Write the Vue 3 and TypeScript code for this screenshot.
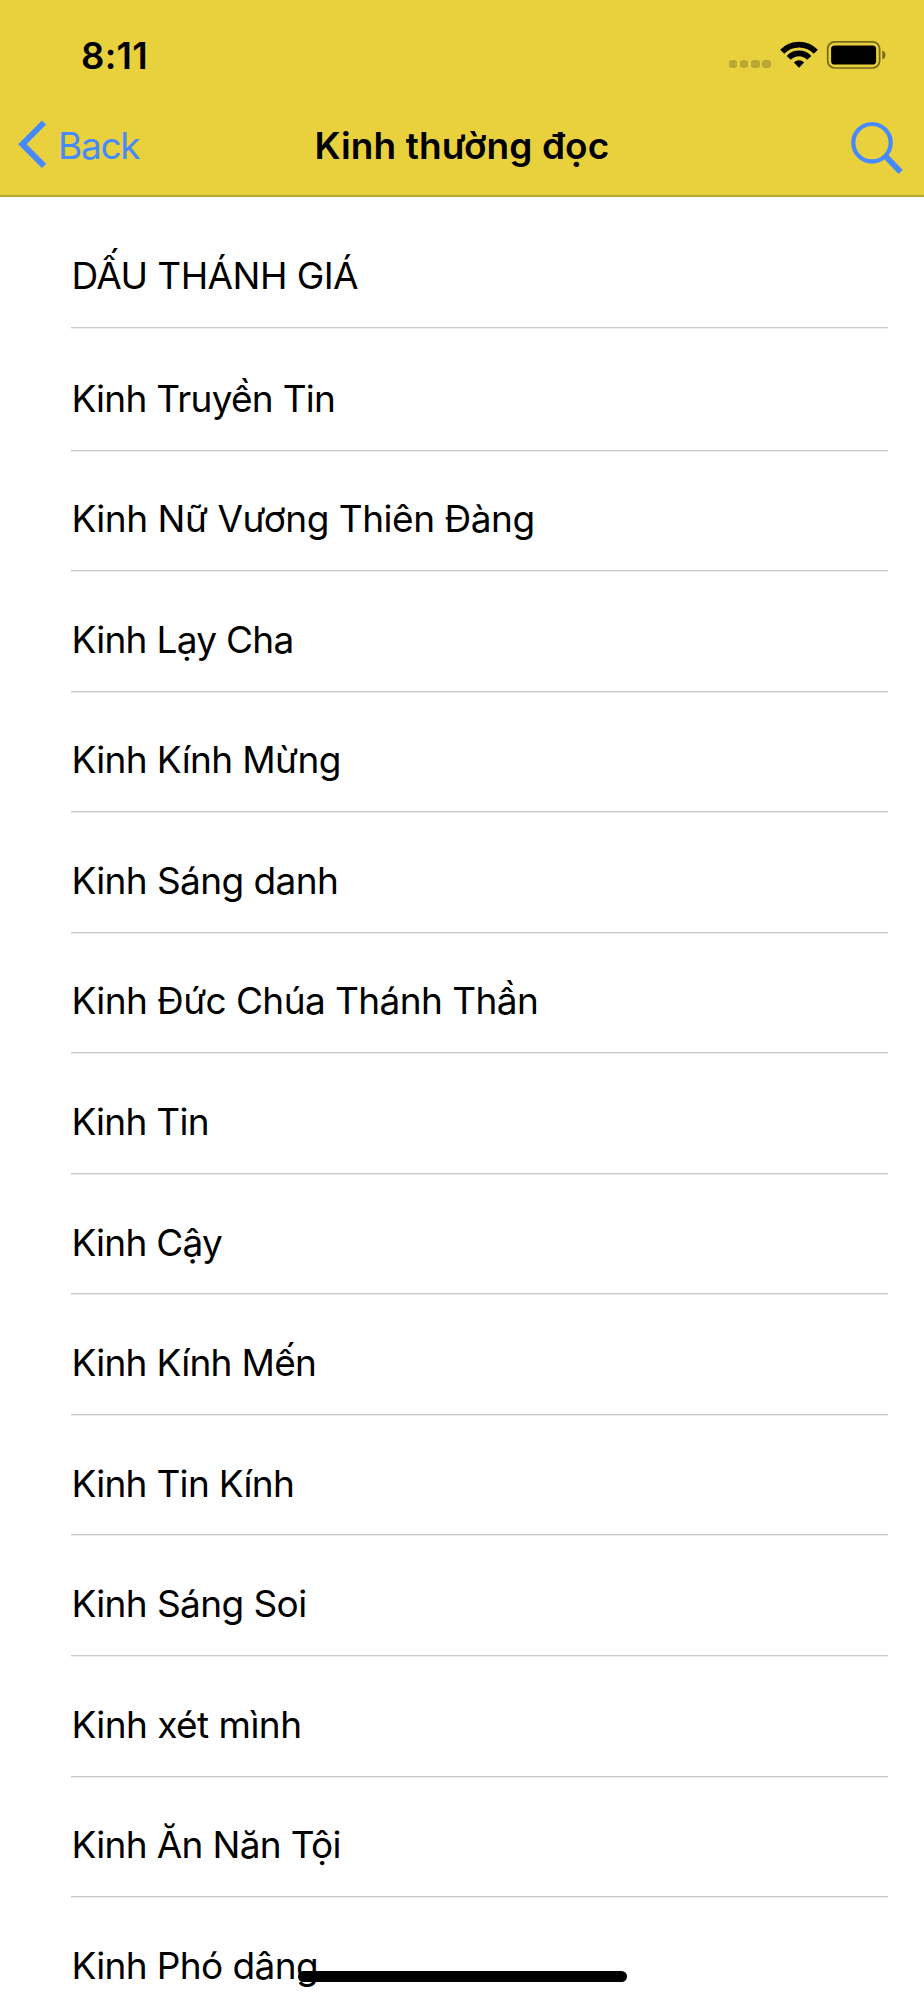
<script setup lang="ts">
interface Prayer {
  title: string
  tracking: number
}

const prayers: Prayer[] = [
  { title: 'DẤU THÁNH GIÁ', tracking: -0.56 },
  { title: 'Kinh Truyền Tin', tracking: -0.73 },
  { title: 'Kinh Nữ Vương Thiên Đàng', tracking: -0.47 },
  { title: 'Kinh Lạy Cha', tracking: -0.7 },
  { title: 'Kinh Kính Mừng', tracking: -0.62 },
  { title: 'Kinh Sáng danh', tracking: -0.6 },
  { title: 'Kinh Đức Chúa Thánh Thần', tracking: -0.58 },
  { title: 'Kinh Tin', tracking: -0.72 },
  { title: 'Kinh Cậy', tracking: -0.75 },
  { title: 'Kinh Kính Mến', tracking: -0.7 },
  { title: 'Kinh Tin Kính', tracking: -0.7 },
  { title: 'Kinh Sáng Soi', tracking: -0.6 },
  { title: 'Kinh xét mình', tracking: -0.54 },
  { title: 'Kinh Ăn Năn Tội', tracking: -0.66 },
  { title: 'Kinh Phó dâng', tracking: -0.62 },
]
</script>

<template>
  <div class="screen">
    <header class="top">
      <div class="status">
        <span class="time">8:11</span>
        <div class="indicators">
          <div class="dots"><i v-for="n in 4" :key="n" /></div>
          <svg class="wifi" width="38" height="28" viewBox="0 0 38 28">
            <g fill="none" stroke="#000" stroke-width="5.7">
              <path d="M2.2 10.8A23.15 23.15 0 0 1 35.8 10.8" />
              <path d="M8.7 16.9A14.2 14.2 0 0 1 29.3 16.9" />
            </g>
            <path d="M19 26.7L13.9 21.4A7.4 7.4 0 0 1 24.1 21.4Z" />
          </svg>
          <svg class="battery" width="60" height="28" viewBox="0 0 60 28">
            <rect x="1.7" y="0.9" width="51.9" height="26.1" rx="7" fill="none" stroke="#000" stroke-opacity=".5" stroke-width="1.7" />
            <rect x="5.1" y="4.5" width="45" height="19" rx="3.6" />
            <path d="M56.3 9.6C60.5 11 60.5 17 56.3 18.4Z" fill-opacity=".5" />
          </svg>
        </div>
      </div>
      <nav class="nav">
        <button class="back">
          <svg width="32" height="48" viewBox="0 0 32 48">
            <path d="M28 2.5L6.4 24.2L28 45.9" fill="none" stroke="#478aff" stroke-width="6" />
          </svg>
          <span>Back</span>
        </button>
        <h1 class="title">Kinh thường đọc</h1>
        <button class="search" aria-label="Search">
          <svg width="54" height="54" viewBox="0 0 54 54" fill="none" stroke="#478aff">
            <circle cx="22" cy="21.7" r="18.7" stroke-width="4.2" />
            <path d="M35.3 35L50.7 51" stroke-width="6" />
          </svg>
        </button>
      </nav>
    </header>
    <ul class="list">
      <li v-for="p in prayers" :key="p.title" class="row">
        <span :style="{ letterSpacing: p.tracking + 'px' }">{{ p.title }}</span>
      </li>
    </ul>
    <div class="home-indicator" />
  </div>
</template>

<style>
body {
  margin: 0;
  background: #fff;
}
</style>

<style scoped>
.screen {
  position: relative;
  box-sizing: border-box;
  width: 924px;
  height: 2000px;
  overflow: hidden;
  background: #fff;
  color: #000;
  font-family: Inter, Roboto, sans-serif;
  font-size: 37px;
  line-height: 48px;
}
.top {
  box-sizing: border-box;
  height: 197px;
  background: #e8d13c;
  border-bottom: 2px solid #b9a737;
}
.status {
  display: flex;
  justify-content: space-between;
  height: 98px;
  padding: 32px 38.5px 0 81px;
  box-sizing: border-box;
}
.time {
  font-weight: 600;
  letter-spacing: 0.3px;
  font-size: 36.5px;
}
.indicators {
  display: flex;
  align-items: flex-start;
  padding-top: 9px;
}
.dots {
  display: flex;
  gap: 2.9px;
  margin: 19px 8.7px 0 0;
}
.dots i {
  width: 8.4px;
  height: 8.4px;
  border-radius: 3px;
  background: #b9a733;
}
.wifi {
  margin: 0.3px 8px 0 0;
}
.battery {
  margin-top: 0.3px;
}
.nav {
  display: grid;
  grid-template-columns: 1fr auto 1fr;
  align-items: start;
  height: 97px;
  padding-top: 22px;
  box-sizing: border-box;
}
button {
  display: flex;
  border: 0;
  padding: 0;
  background: none;
  color: #478aff;
  font: inherit;
}
.back {
  padding-left: 16px;
}
.back span {
  margin: 2px 0 0 10px;
  letter-spacing: -1.3px;
}
.title {
  margin: 2px 0 0;
  font-size: 37px;
  font-weight: 600;
  letter-spacing: 0.1px;
}
.search {
  justify-self: end;
  margin: 1px 20px 0 0;
}
.list {
  list-style: none;
  margin: 0;
  padding: 10.4px 36px 0 71.4px;
}
.row {
  box-sizing: border-box;
  height: 120.55px;
  padding-top: 44.7px;
  border-bottom: 1px solid #c8c7cc;
  box-shadow: 0 1px 0 #ececee;
  white-space: nowrap;
}
.row:nth-child(2) {
  height: 122.6px;
  padding-top: 46.8px;
}
.home-indicator {
  position: absolute;
  left: 297.5px;
  top: 1971px;
  width: 329.5px;
  height: 11px;
  border-radius: 6px;
  background: #000;
}
</style>
